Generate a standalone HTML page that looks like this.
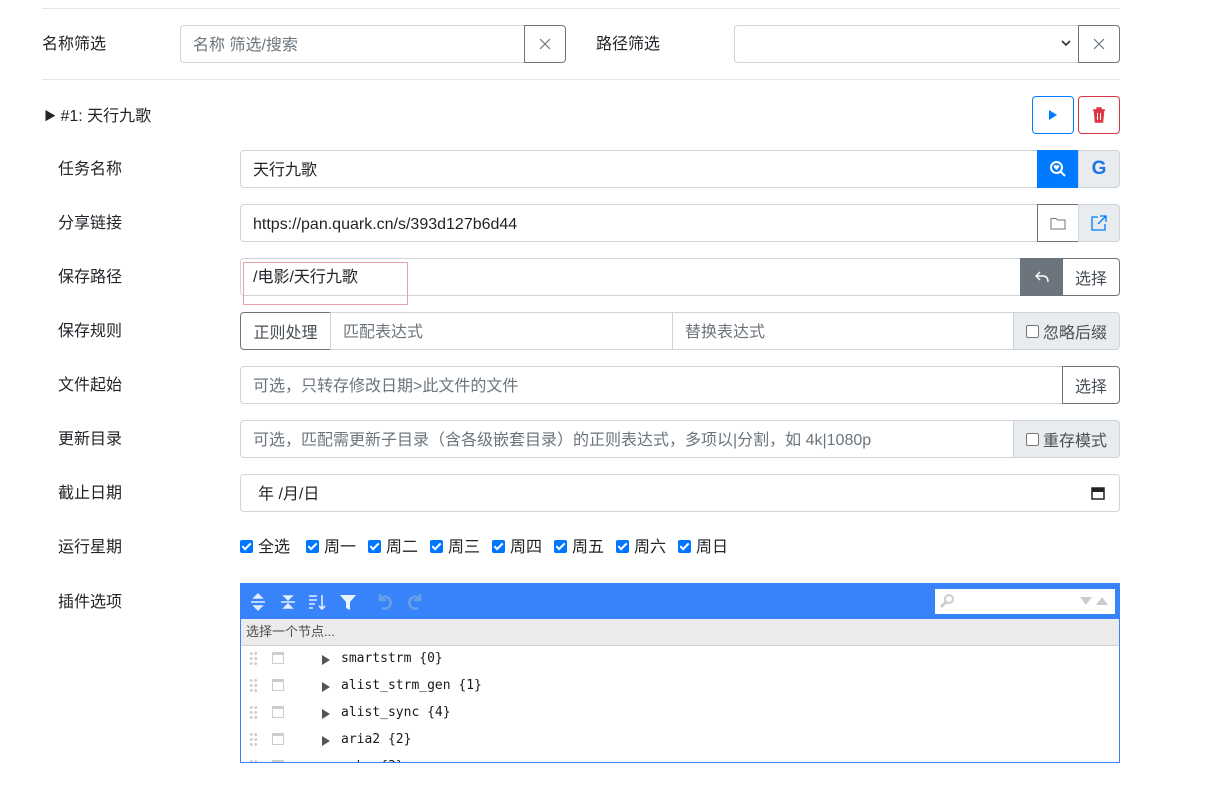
<!DOCTYPE html>
<html><head><meta charset="utf-8"><style>
*{box-sizing:border-box;margin:0;padding:0}
body{width:1209px;height:800px;overflow:hidden;background:#fff;font-family:"Liberation Sans","Noto Sans CJK SC",sans-serif;font-size:16px;color:#212529;position:relative}
.a{position:absolute}
.hr{position:absolute;left:42px;width:1078px;height:1px;background:#e6e6e6}
.lbl{position:absolute;font-size:16px;line-height:20px}
.inp{position:absolute;border:1px solid #ced4da;background:#fff;height:38px;padding:2px 12px 0;line-height:36px;font-size:16px;color:#495057}
.ph{color:#6c757d}
.btn{position:absolute;height:38px;border:1px solid #6c757d;background:#fff;display:flex;align-items:center;justify-content:center;color:#6c757d}
.grp{position:absolute;height:38px;background:#e9ecef;border:1px solid #ced4da;display:flex;align-items:center;justify-content:center;color:#495057}
.cb{display:inline-block;width:13px;height:13px;border:1px solid #767676;border-radius:2px;background:#fff;margin-right:4px;vertical-align:-1px}
.cbc{display:inline-block;width:13px;height:13px;border-radius:2px;background:#0075ff;margin-right:5px;vertical-align:-1px;position:relative}
.cbc:after{content:"";position:absolute;left:4px;top:1px;width:3px;height:7px;border:solid #fff;border-width:0 2px 2px 0;transform:rotate(45deg)}
.mono{font-family:"DejaVu Sans Mono","Liberation Mono",monospace;font-size:13px;color:#1a1a1a}
.dots{position:absolute;left:8px;top:5px;width:9px;height:15px;background:radial-gradient(circle,#ccc 1.3px,transparent 1.6px) 0 0/4.5px 5px}
.tri{position:absolute;left:81px;top:9px;width:0;height:0;border-left:8px solid #555;border-top:5px solid transparent;border-bottom:5px solid transparent}
</style></head><body>
<div class="hr" style="top:8px"></div>
<div class="lbl" style="left:42px;top:35px">名称筛选</div>
<div class="inp ph" style="left:180px;top:25px;width:346px;border-radius:4px 0 0 4px">名称 筛选/搜索</div>
<div class="btn" style="left:524px;top:25px;width:42px;border-radius:0 4px 4px 0"><svg width="14" height="14"><path d="M2 2L12 12M12 2L2 12" stroke="#6c757d" stroke-width="1.2"/></svg></div>
<div class="lbl" style="left:596px;top:35px">路径筛选</div>
<div class="inp" style="left:734px;top:25px;width:346px;border-radius:4px 0 0 4px"><svg class="a" style="right:8px;top:14px" width="10" height="8"><path d="M1 1L5 5L9 1" stroke="#333" stroke-width="1.6" fill="none"/></svg></div>
<div class="btn" style="left:1078px;top:25px;width:42px;border-radius:0 4px 4px 0"><svg width="14" height="14"><path d="M2 2L12 12M12 2L2 12" stroke="#6c757d" stroke-width="1.2"/></svg></div>
<div class="hr" style="top:79px"></div>

<div class="lbl" style="left:44px;top:106px"><span style="font-size:12px;vertical-align:1px">▶</span> #1: 天行九歌</div>
<div class="btn" style="left:1032px;top:96px;width:42px;border-color:#007bff;border-radius:4px"><svg width="10" height="10"><path d="M1 0L9 5L1 10Z" fill="#007bff"/></svg></div>
<div class="btn" style="left:1078px;top:96px;width:42px;border-color:#dc3545;border-radius:4px"><svg width="14" height="16"><path d="M1 3H13M5 3V1H9V3M2.5 4.5L3.5 15H10.5L11.5 4.5Z" stroke="#dc3545" stroke-width="1.5" fill="#dc3545"/><path d="M5.5 6V13M8.5 6V13" stroke="#fff" stroke-width="1"/></svg></div>

<div class="lbl" style="left:58px;top:160px">任务名称</div>
<div class="inp" style="left:240px;top:150px;width:798px;border-radius:4px 0 0 4px;color:#212529">天行九歌</div>
<div class="btn" style="left:1037px;top:150px;width:42px;background:#007bff;border-color:#007bff"><svg width="18" height="18"><circle cx="7.5" cy="7.5" r="5.5" stroke="#fff" stroke-width="2" fill="none"/><path d="M11.5 11.5L16 16" stroke="#fff" stroke-width="2"/><path d="M7.5 10L5 7.5A1.3 1.3 0 0 1 7.5 5.8A1.3 1.3 0 0 1 10 7.5Z" fill="#fff"/></svg></div>
<div class="grp" style="left:1078px;top:150px;width:42px;border-radius:0 4px 4px 0;color:#1a73e8;font-weight:bold;font-size:19px">G</div>

<div class="lbl" style="left:58px;top:214px">分享链接</div>
<div class="inp" style="left:240px;top:204px;width:798px;border-radius:4px 0 0 4px;color:#212529">https://pan.quark.cn/s/393d127b6d44</div>
<div class="btn" style="left:1037px;top:204px;width:42px"><svg width="16" height="14"><path d="M1 2.5H6L7.5 4H15V13H1Z" stroke="#6c757d" fill="none"/></svg></div>
<div class="grp" style="left:1078px;top:204px;width:42px;border-radius:0 4px 4px 0"><svg width="18" height="18"><path d="M8 3H2V16H15V10M10 2H16V8M16 2L8 10" stroke="#007bff" stroke-width="1.3" fill="none"/></svg></div>

<div class="lbl" style="left:58px;top:268px">保存路径</div>
<div class="inp" style="left:240px;top:258px;width:782px;border-radius:4px 0 0 4px"></div>
<div class="a" style="left:243px;top:262px;width:165px;height:43px;border:1px solid #e8a0a8;padding:5px 9px;line-height:20px;color:#212529">/电影/天行九歌</div>
<div class="btn" style="left:1020px;top:258px;width:43px;background:#6c757d"><svg width="14" height="12"><path d="M5 1L1 5L5 9M1 5H8Q13 5 13 11" stroke="#fff" stroke-width="1.4" fill="none"/></svg></div>
<div class="btn" style="left:1062px;top:258px;width:58px;border-radius:0 4px 4px 0;color:#495057">选择</div>

<div class="lbl" style="left:58px;top:322px">保存规则</div>
<div class="btn" style="left:240px;top:312px;width:91px;border-radius:4px 0 0 4px;color:#495057">正则处理</div>
<div class="inp ph" style="left:330px;top:312px;width:343px">匹配表达式</div>
<div class="inp ph" style="left:672px;top:312px;width:342px">替换表达式</div>
<div class="grp" style="left:1013px;top:312px;width:107px;border-radius:0 4px 4px 0"><span class="cb"></span>忽略后缀</div>

<div class="lbl" style="left:58px;top:376px">文件起始</div>
<div class="inp ph" style="left:240px;top:366px;width:823px;border-radius:4px 0 0 4px">可选，只转存修改日期&gt;此文件的文件</div>
<div class="btn" style="left:1062px;top:366px;width:58px;border-radius:0 4px 4px 0;color:#495057">选择</div>

<div class="lbl" style="left:58px;top:430px">更新目录</div>
<div class="inp ph" style="left:240px;top:420px;width:774px;border-radius:4px 0 0 4px">可选，匹配需更新子目录（含各级嵌套目录）的正则表达式，多项以|分割，如 4k|1080p</div>
<div class="grp" style="left:1013px;top:420px;width:107px;border-radius:0 4px 4px 0"><span class="cb"></span>重存模式</div>

<div class="lbl" style="left:58px;top:484px">截止日期</div>
<div class="inp" style="left:240px;top:474px;width:880px;border-radius:4px;color:#212529;padding-left:17px">年 /月/日<svg class="a" style="right:14px;top:11px" width="14" height="14"><rect x="1" y="2" width="12" height="11" stroke="#222" stroke-width="1.5" fill="none"/><rect x="1" y="2" width="12" height="4" fill="#222"/></svg></div>

<div class="lbl" style="left:58px;top:538px">运行星期</div>
<div class="lbl" style="left:240px;top:538px;white-space:nowrap">
<span class="a" style="left:0"><span class="cbc"></span>全选</span><span class="a" style="left:66px"><span class="cbc"></span>周一</span><span class="a" style="left:128px"><span class="cbc"></span>周二</span><span class="a" style="left:190px"><span class="cbc"></span>周三</span><span class="a" style="left:252px"><span class="cbc"></span>周四</span><span class="a" style="left:314px"><span class="cbc"></span>周五</span><span class="a" style="left:376px"><span class="cbc"></span>周六</span><span class="a" style="left:438px"><span class="cbc"></span>周日</span></div>

<div class="lbl" style="left:58px;top:593px">插件选项</div>
<div class="a" style="left:240px;top:583px;width:880px;height:180px;border:1px solid #3883fa;overflow:hidden">
 <div class="a" style="left:0;top:0;width:878px;height:35px;background:#3883fa">
  <svg class="a" style="left:8px;top:8px" width="120" height="20">
   <path d="M2 10H16M9 2L5 6H13ZM9 18L5 14H13Z" stroke="#fff" fill="#fff" stroke-width="1.4" opacity=".85"/>
   <path d="M32 10H46M39 8L35 4H43ZM39 12L35 16H43Z" stroke="#fff" fill="#fff" stroke-width="1.4" opacity=".85"/>
   <path d="M60 4H68M60 8H68M60 12H66M60 16H64M73 3V17M70 14L73 17L76 14" stroke="#fff" stroke-width="1.6" fill="none" opacity=".85"/>
   <path d="M91 3H107L101 10V18L97 16V10Z" fill="#fff" opacity=".9"/>
  </svg>
  <svg class="a" style="left:133px;top:8px" width="50" height="20"><path d="M6 7A6 6 0 1 1 8 16M6 2V8H12" stroke="#6a9ee8" stroke-width="2.5" fill="none"/><path d="M46 7A6 6 0 1 0 44 16M46 2V8H40" stroke="#6a9ee8" stroke-width="2.5" fill="none"/></svg>
  <div class="a" style="left:694px;top:5px;width:180px;height:25px;background:#fff">
   <svg class="a" style="left:4px;top:4px" width="16" height="16"><circle cx="10" cy="6" r="4" stroke="#ccc" stroke-width="2" fill="none"/><path d="M7 9L2 14" stroke="#ccc" stroke-width="3"/></svg>
   <svg class="a" style="right:5px;top:8px" width="30" height="9"><path d="M0 0H12L6 8Z M16 8H28L22 0Z" fill="#ccc"/></svg>
  </div>
 </div>
 <div class="a" style="left:0;top:35px;width:878px;height:27px;background:#ebebeb;border-bottom:1px solid #d3d3d3;font-size:13px;line-height:26px;padding-left:5px;color:#4d4d4d">选择一个节点...</div>
 <div class="a" style="left:0;top:62px;width:878px">
  <div style="position:relative;height:27px"><span class="dots"></span><span class="a" style="left:31px;top:6px;width:12px;height:12px;border:1px solid #ccc;border-top-width:3px"></span><span class="tri"></span><span class="a mono" style="left:100px;top:5px">smartstrm {0}</span></div>
  <div style="position:relative;height:27px"><span class="dots"></span><span class="a" style="left:31px;top:6px;width:12px;height:12px;border:1px solid #ccc;border-top-width:3px"></span><span class="tri"></span><span class="a mono" style="left:100px;top:5px">alist_strm_gen {1}</span></div>
  <div style="position:relative;height:27px"><span class="dots"></span><span class="a" style="left:31px;top:6px;width:12px;height:12px;border:1px solid #ccc;border-top-width:3px"></span><span class="tri"></span><span class="a mono" style="left:100px;top:5px">alist_sync {4}</span></div>
  <div style="position:relative;height:27px"><span class="dots"></span><span class="a" style="left:31px;top:6px;width:12px;height:12px;border:1px solid #ccc;border-top-width:3px"></span><span class="tri"></span><span class="a mono" style="left:100px;top:5px">aria2 {2}</span></div>
  <div style="position:relative;height:27px"><span class="dots"></span><span class="a" style="left:31px;top:6px;width:12px;height:12px;border:1px solid #ccc;border-top-width:3px"></span><span class="tri"></span><span class="a mono" style="left:100px;top:5px">emby {3}</span></div>
 </div>
</div>
</body></html>
